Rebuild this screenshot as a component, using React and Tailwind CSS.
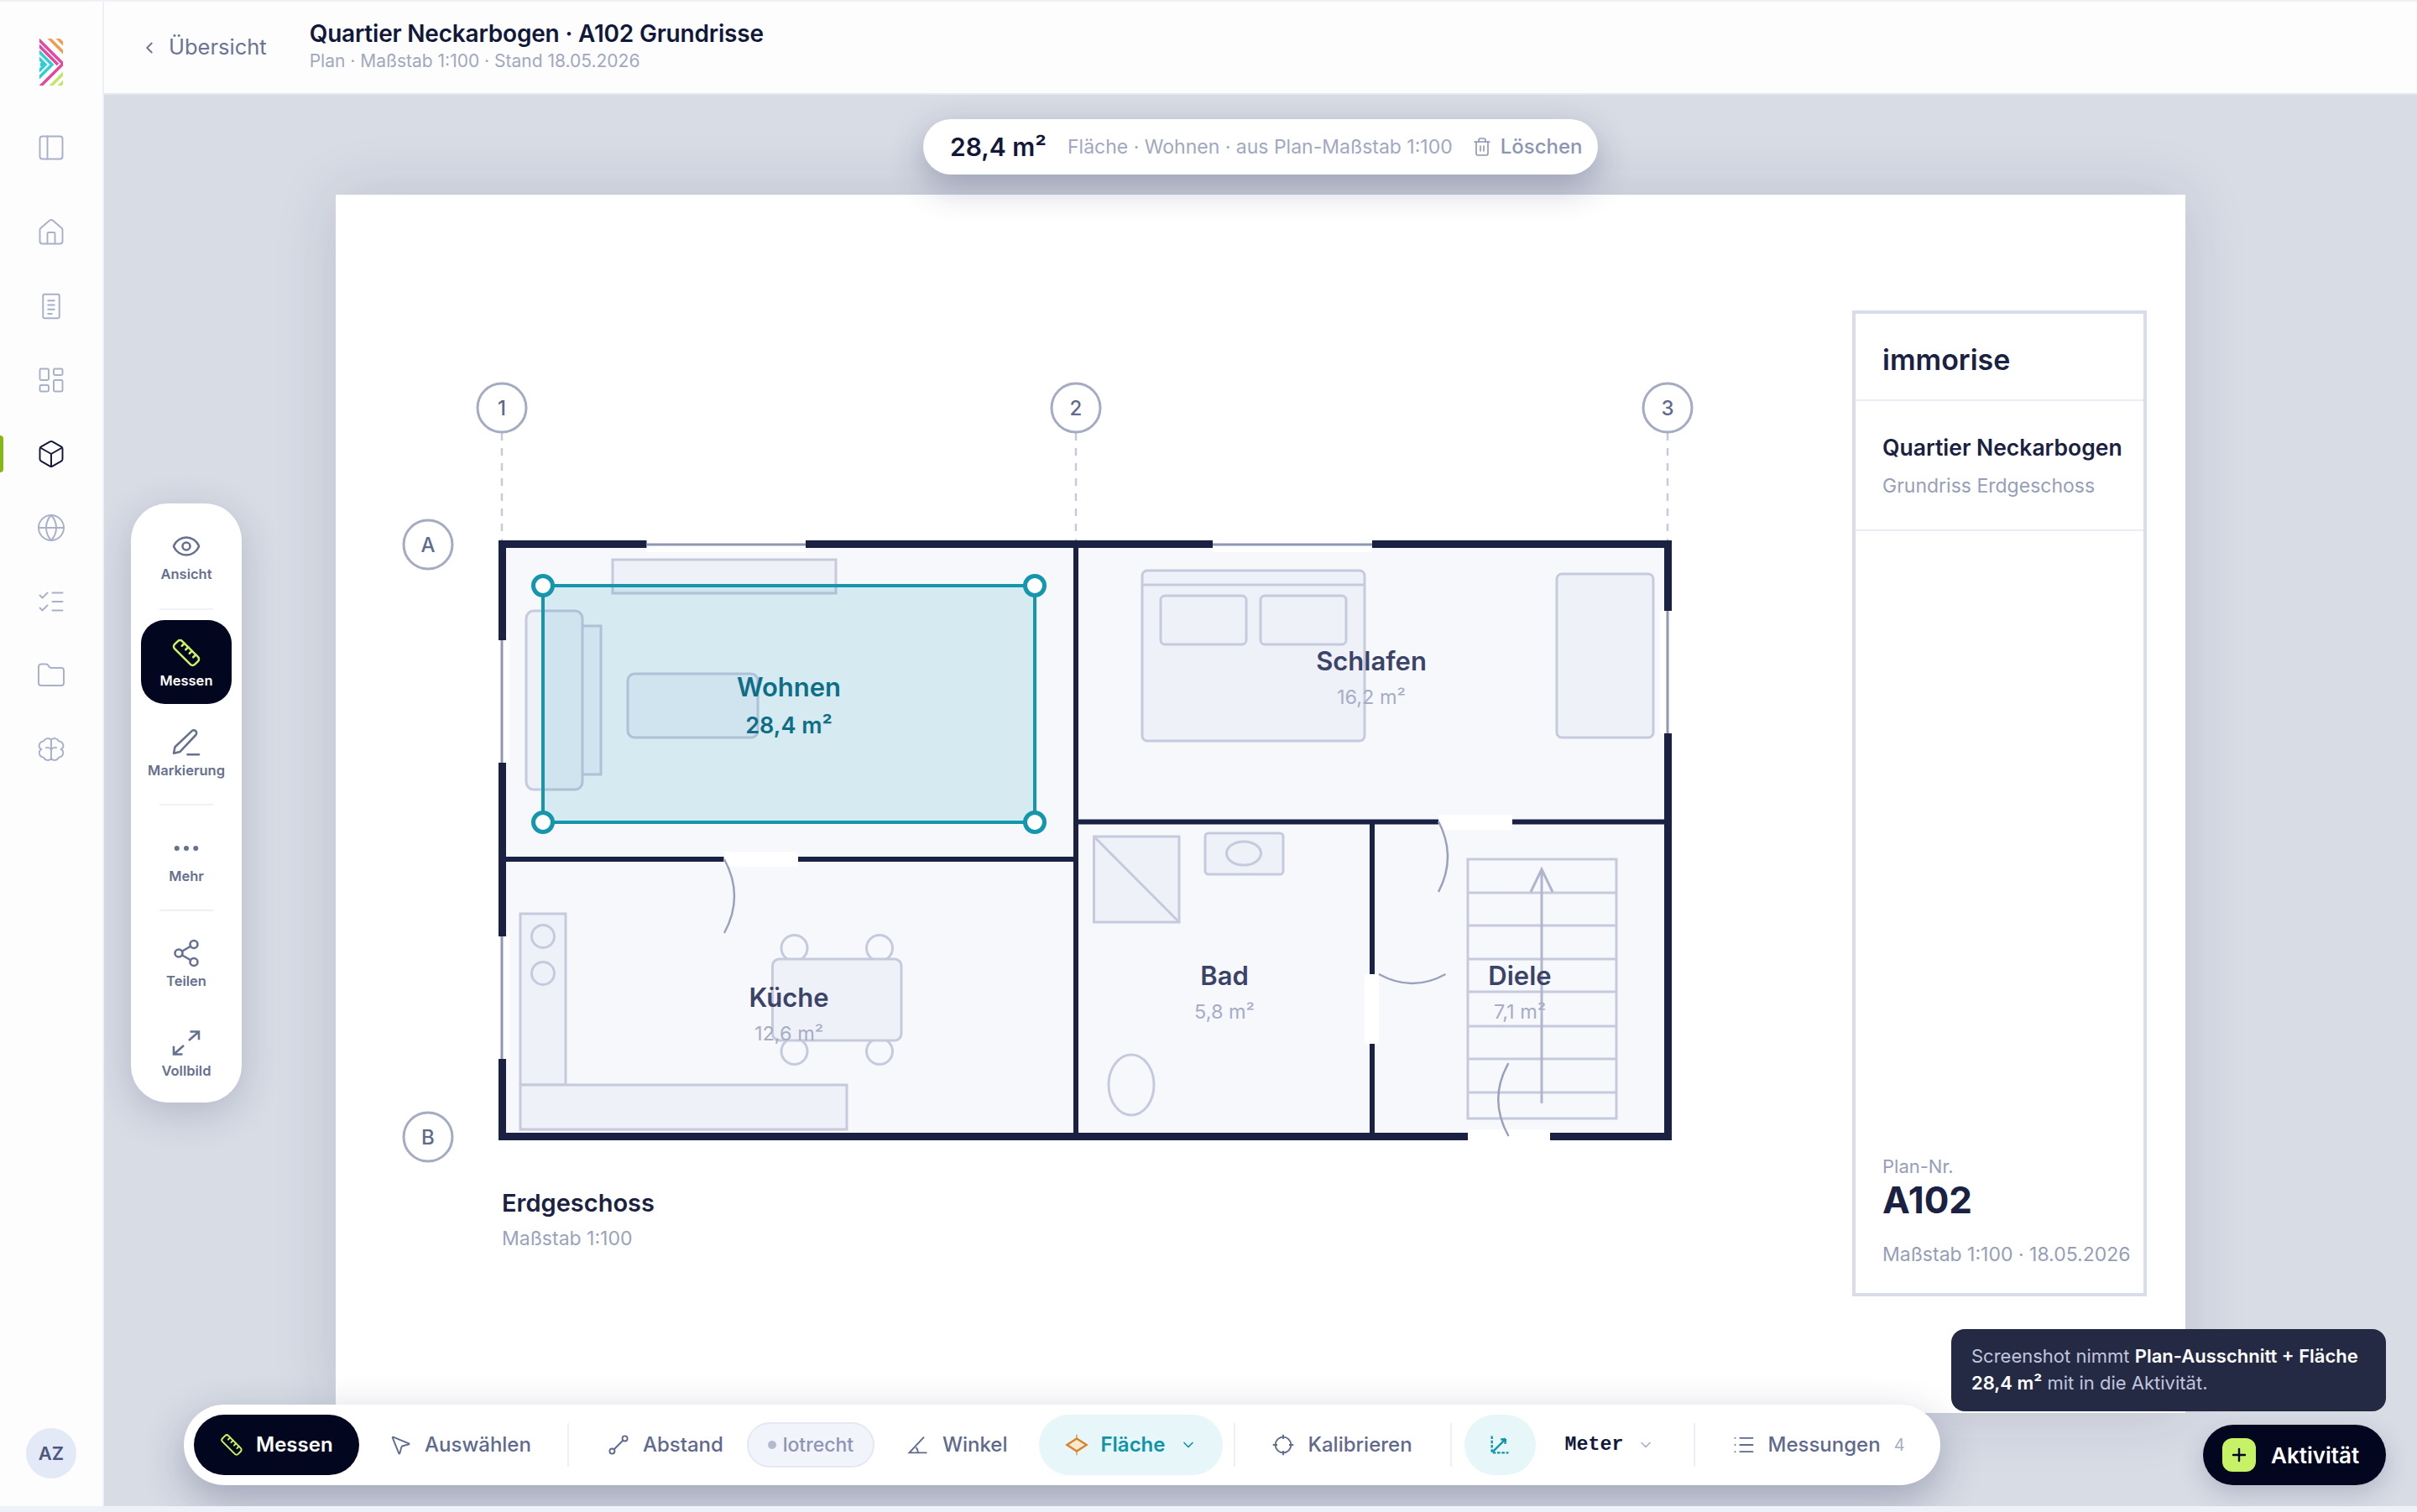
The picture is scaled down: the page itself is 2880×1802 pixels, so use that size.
import React from 'react';
import {
    Box, ChevronDown, ChevronLeft, Eye, Folder, Globe, House, LayoutDashboard,
    List, ListChecks, MousePointer2, PanelLeft, Plus, Ruler, Share2, Trash2,
} from 'lucide-react';

const Logo = () => (
    <svg width="28" height="56" viewBox="48 46 28 56" fill="none" strokeWidth="3.4">
        <path d="M58 44l20 20M68 44l10 10" stroke="#f39a4c" />
        <path d="M78 86L60 104M78 96l-8 8" stroke="#bfe765" />
        <path d="M46 46l30 30-30 30M46 53l24 24" stroke="#e6479b" />
        <path d="M46 60l17 17-17 17M46 68l9 9-9 9" stroke="#2ccfd8" />
        <circle cx="51" cy="77" r="2.4" fill="#2ccfd8" />
    </svg>
);

const DocIcon = (props) => (
    <svg viewBox="0 0 24 24" fill="none" stroke="currentColor" strokeWidth="1.3" {...props}>
        <rect x="5.500" y="2.500" width="13" height="19" rx="1" />
        <path d="M9 7.500h6M9 11h6M9 14.500h6M9 18h4" />
    </svg>
);

const BrainIcon = (props) => (
    <svg viewBox="0 0 24 24" fill="none" stroke="currentColor" strokeWidth="1.3" strokeLinejoin="round" {...props}>
        <path d="M12 4.500A3.600 3.600 0 0 0 6 5.600a3.600 3.600 0 0 0-3.200 5.200L4.200 12l-1.400 1.200A3.600 3.600 0 0 0 6 18.400a3.600 3.600 0 0 0 6 1.100 3.600 3.600 0 0 0 6-1.100 3.600 3.600 0 0 0 3.200-5.200L19.800 12l1.400-1.200A3.600 3.600 0 0 0 18 5.600a3.600 3.600 0 0 0-6-1.100Z" />
        <path d="M12 4.500v15M12 12.500c-1-2-3-2.200-4.500-1.500M12 12.500c1-2 3-2.200 4.500-1.500" />
    </svg>
);

const PenIcon = (props) => (
    <svg viewBox="0 0 24 24" fill="none" stroke="currentColor" strokeWidth="1.7" strokeLinecap="round" strokeLinejoin="round" {...props}>
        <path d="M2 20.500l1-5L16.300 2.900a2.200 2.200 0 0 1 3.200 3.100L7 19.300Z" />
        <path d="M13 21.500h9" />
    </svg>
);

const ExpandIcon = (props) => (
    <svg viewBox="0 0 24 24" fill="none" stroke="currentColor" strokeWidth="2" {...props}>
        <path d="M14 10l8-7M15 3h7v6.500M10 14l-8 7M9 21H2v-6.500" />
    </svg>
);

const DotsIcon = (props) => (
    <svg viewBox="0 0 24 24" fill="currentColor" {...props}>
        <circle cx="4.500" cy="12" r="2" />
        <circle cx="12" cy="12" r="2" />
        <circle cx="19.500" cy="12" r="2" />
    </svg>
);

const DistanceIcon = (props) => (
    <svg viewBox="0 0 24 24" fill="none" stroke="currentColor" strokeWidth="1.8" {...props}>
        <circle cx="5.500" cy="18.500" r="2.600" />
        <circle cx="18.500" cy="5.500" r="2.600" />
        <path d="M7.500 16.500l9-9" />
    </svg>
);

const AngleIcon = (props) => (
    <svg viewBox="0 0 24 24" fill="none" stroke="currentColor" strokeWidth="1.8" {...props}>
        <path d="M18 4L3 20h18M12 20c0-2.200-.8-4-2.200-5.400" />
    </svg>
);

const AreaIcon = (props) => (
    <svg viewBox="0 0 24 24" fill="none" {...props}>
        <path d="M12 1.500v4M12 18.500v4" stroke="#d9822b" strokeWidth="1" />
        <path d="M12 5.500L22 12l-10 6.500L2 12Z" fill="#fbe9cf" stroke="#d9822b" strokeWidth="2" />
    </svg>
);

const CalibrateIcon = (props) => (
    <svg viewBox="0 0 24 24" fill="none" stroke="currentColor" strokeWidth="1.8" {...props}>
        <circle cx="12" cy="12" r="8" />
        <path d="M12 1.500V6M12 18v4.500M1.500 12H6M18 12h4.500" />
    </svg>
);

const AxisIcon = (props) => (
    <svg viewBox="0 0 24 24" fill="none" stroke="currentColor" strokeWidth="2" {...props}>
        <path d="M4 3v17h17" strokeDasharray="3 1.500" />
        <path d="M5 19L18 6M18 6l-5 .5M18 6l-.5 5" />
    </svg>
);

const SIDE_ICONS = [
    { Icon: House },
    { Icon: DocIcon },
    { Icon: LayoutDashboard },
    { Icon: Box, active: true },
    { Icon: Globe },
    { Icon: ListChecks },
    { Icon: Folder },
    { Icon: BrainIcon },
];

const Sidebar = () => (
    <aside className="w-[124px] shrink-0 bg-[#fdfdfe] border-r-2 border-[#edf0f6] flex flex-col items-center relative">
        <div className="mt-[44px] h-[56px] flex"><Logo /></div>
        <PanelLeft className="mt-[56px] w-[36px] h-[36px] text-[#a9b1c9]" strokeWidth={1.3} />
        {SIDE_ICONS.map(({ Icon, active }, i) => (
            <div key={i} className={`h-[88px] w-full flex items-center justify-center relative ${i === 0 ? 'mt-[39px]' : ''}`}>
                {active && <span className="absolute left-0 top-[22px] w-[4px] h-[44px] rounded-r bg-[#84b817]" />}
                <Icon className={`w-[36px] h-[36px] ${active ? 'text-[#12183a]' : 'text-[#a9b1c9]'}`} strokeWidth={1.3} />
            </div>
        ))}
        <div className="mt-auto mb-[33px] w-[60px] h-[60px] rounded-full bg-[#e4e9f7] flex items-center justify-center text-[22px] font-semibold text-[#4d5880]">AZ</div>
    </aside>
);

const Header = () => (
    <header className="h-[111px] shrink-0 bg-[#fdfdfe] border-b-2 border-[#e6e9f0] flex items-center">
        <ChevronLeft className="ml-[43px] w-[22px] h-[22px] text-[#6b7494]" strokeWidth={2} />
        <span className="ml-[12px] text-[25.500px] text-[#6b7494]">Übersicht</span>
        <div className="ml-[51px] flex flex-col mb-[6px]">
            <h1 className="text-[28px] leading-[38px] font-semibold tracking-[-0.2px] text-[#12183a]">Quartier Neckarbogen · A102 Grundrisse</h1>
            <p className="text-[21px] leading-[28px] text-[#a1a8bf]">Plan · Maßstab 1:100 · Stand 18.05.2026</p>
        </div>
    </header>
);

const F = { fill: '#eef1f8', stroke: '#c5cadc', strokeWidth: 3 };
const Room = ({ x, y, name, area }) => (
    <g textAnchor="middle">
        <text x={x} y={y} fontSize="31" fontWeight="600" fill="#3b4468">{name}</text>
        <text x={x} y={y + 40} fontSize="23.500" fill="#a6adc4">{area}</text>
    </g>
);

const Bubble = ({ cx, cy, label }) => (
    <g>
        <circle cx={cx} cy={cy} r="29" fill="#fff" stroke="#a4abc2" strokeWidth="3" />
        <text x={cx} y={cy + 9} textAnchor="middle" fontSize="24" fontWeight="500" fill="#5f6a8d">{label}</text>
    </g>
);

const Plan = () => (
    <svg className="w-[1807px] h-[1452px] shrink-0" viewBox="400 232 1807 1452">
        {/* grid */}
        {[598, 1282, 1987].map((x) => (
            <path key={x} d={`M${x} 516V644`} stroke="#c5cadc" strokeWidth="2.500" strokeDasharray="9 9" />
        ))}
        <Bubble cx={598} cy={486} label="1" />
        <Bubble cx={1282} cy={486} label="2" />
        <Bubble cx={1987} cy={486} label="3" />
        <Bubble cx={510} cy={649} label="A" />
        <Bubble cx={510} cy={1355} label="B" />

        {/* floor */}
        <rect x="598" y="648" width="1390" height="707" fill="#f6f8fc" />

        {/* furniture wohnen */}
        <rect x="730" y="667" width="266" height="40" {...F} />
        <rect x="693" y="746" width="23" height="177" {...F} />
        <rect x="627" y="728" width="67" height="213" rx="9" {...F} />
        <rect x="748" y="803" width="155" height="76" rx="8" {...F} />

        {/* furniture schlafen */}
        <rect x="1361" y="680" width="265" height="203" rx="6" {...F} />
        <path d="M1361 697H1626" stroke="#c5cadc" strokeWidth="3" />
        <rect x="1383" y="710" width="102" height="58" rx="5" {...F} />
        <rect x="1502" y="710" width="102" height="58" rx="5" {...F} />
        <rect x="1855" y="684" width="115" height="195" rx="6" {...F} />

        {/* furniture kueche */}
        <rect x="620" y="1089" width="54" height="204" {...F} />
        <rect x="620" y="1293" width="389" height="53" {...F} />
        <circle cx="647" cy="1116" r="13.500" fill="none" stroke="#c5cadc" strokeWidth="3" />
        <circle cx="647" cy="1160" r="13.500" fill="none" stroke="#c5cadc" strokeWidth="3" />
        {[[946.5, 1130], [1048, 1130], [946.5, 1253], [1048, 1253]].map(([cx, cy]) => (
            <circle key={`${cx}-${cy}`} cx={cx} cy={cy} r="15.500" fill="none" stroke="#c5cadc" strokeWidth="3" />
        ))}
        <rect x="920.500" y="1143" width="153.500" height="97" rx="8" {...F} />

        {/* furniture bad */}
        <rect x="1303.500" y="997" width="101.500" height="102" {...F} />
        <path d="M1303.500 997L1405 1099" stroke="#c5cadc" strokeWidth="3" />
        <rect x="1436" y="993" width="93" height="49" rx="4" {...F} />
        <ellipse cx="1482" cy="1017" rx="20.500" ry="14" fill="none" stroke="#c5cadc" strokeWidth="3" />
        <ellipse cx="1348" cy="1293" rx="27" ry="36" fill="none" stroke="#c5cadc" strokeWidth="3" />

        {/* treppe */}
        <rect x="1749" y="1024" width="177" height="309" fill="none" stroke="#c5cadc" strokeWidth="3" />
        <path d="M1749 1064H1926M1749 1103H1926M1749 1143H1926M1749 1182H1926M1749 1223H1926M1749 1262H1926M1749 1302H1926" stroke="#c5cadc" strokeWidth="3" />
        <path d="M1837 1315V1038M1824 1063L1837 1036L1850 1063" fill="none" stroke="#b0b7cc" strokeWidth="3" />

        {/* walls */}
        <path d="M1282 648V1355M1282 979.500H1988M1635 979.500V1355M598 1024H1282" fill="none" stroke="#1a2142" strokeWidth="6" />
        <rect x="598.500" y="648.500" width="1389" height="706" fill="none" stroke="#1a2142" strokeWidth="9" />

        {/* windows */}
        <rect x="770.500" y="643" width="189.500" height="15" fill="#fff" />
        <rect x="1445" y="643" width="190" height="15" fill="#fff" />
        <path d="M770.500 649H960M1445 649H1635" stroke="#8f97b3" strokeWidth="3" />
        <rect x="593" y="763" width="14" height="146" fill="#fff" />
        <rect x="593" y="1116" width="14" height="146" fill="#fff" />
        <rect x="1978" y="728" width="15" height="146" fill="#fff" />
        <path d="M598 763V909M598 1116V1262M1987 728V874" stroke="#8f97b3" strokeWidth="3" />

        {/* doors */}
        <rect x="862.500" y="1015" width="88.500" height="18" fill="#fff" />
        <rect x="1714" y="971" width="88" height="18" fill="#fff" />
        <rect x="1626" y="1161" width="17" height="83" fill="#fff" />
        <rect x="1749" y="1346" width="98" height="14" fill="#fff" />
        <path d="M863 1024Q887 1068 863 1112M1714 979Q1736 1021 1714 1063M1643 1161Q1683 1183 1722.500 1161M1797.500 1354Q1773 1310 1797.500 1267" fill="none" stroke="#9aa1bb" strokeWidth="2.500" />

        {/* labels */}
        <Room x={1634} y={799} name="Schlafen" area="16,2 m²" />
        <Room x={940} y={1200} name="Küche" area="12,6 m²" />
        <Room x={1459} y={1174} name="Bad" area="5,8 m²" />
        <Room x={1811} y={1174} name="Diele" area="7,1 m²" />

        {/* messflaeche */}
        <rect x="647" y="698" width="586" height="282" fill="#1296af" fillOpacity="0.14" stroke="#1496ad" strokeWidth="4" />
        {[[647, 698], [1233, 698], [647, 980], [1233, 980]].map(([cx, cy]) => (
            <circle key={`${cx}-${cy}`} cx={cx} cy={cy} r="11.500" fill="#fff" stroke="#1496ad" strokeWidth="5" />
        ))}
        <g textAnchor="middle" fontWeight="600" fill="#0e6e87">
            <text x="940" y="830" fontSize="31">Wohnen</text>
            <text x="940" y="874" fontSize="27">28,4 m²</text>
        </g>

        <text x="598" y="1444" fontSize="29" fontWeight="600" fill="#1a2142">Erdgeschoss</text>
        <text x="598" y="1484" fontSize="23" fill="#9ba3bb">Maßstab 1:100</text>
    </svg>
);

const TitleBlock = () => (
    <div className="w-[351px] h-[1175px] mt-[138px] border-[4px] border-[#d8dde9] flex flex-col">
        <div className="h-[104px] shrink-0 border-b-[2px] border-[#e9ecf4] pl-[32px] pt-[7px] flex items-center">
            <span className="text-[34px] font-semibold text-[#1a2142]">immorise</span>
        </div>
        <div className="h-[155px] shrink-0 border-b-[2px] border-[#e9ecf4] pl-[32px] pt-[35px]">
            <div className="text-[26.500px] leading-[40px] font-semibold text-[#1a2142] whitespace-nowrap">Quartier Neckarbogen</div>
            <div className="mt-[8px] text-[23px] leading-[36px] text-[#969eb8] whitespace-nowrap">Grundriss Erdgeschoss</div>
        </div>
        <div className="mt-auto pl-[32px] pb-[30px]">
            <div className="text-[22px] leading-[28px] text-[#969eb8] translate-y-[2px]">Plan-Nr.</div>
            <div className="text-[44px] leading-[56px] font-bold text-[#1a2142]">A102</div>
            <div className="mt-[21px] text-[23px] leading-[32px] text-[#969eb8] whitespace-nowrap">Maßstab 1:100 · 18.05.2026</div>
        </div>
    </div>
);

const TOOLS = [
    { Icon: Eye, label: 'Ansicht', divider: 'mt-[9px] mb-[12px]' },
    { Icon: Ruler, label: 'Messen', active: true },
    { Icon: PenIcon, label: 'Markierung', cls: 'mt-[11px]', divider: 'mt-[8px] mb-[16px]' },
    { Icon: DotsIcon, label: 'Mehr', divider: 'mt-[8px] mb-[15px]' },
    { Icon: Share2, label: 'Teilen' },
    { Icon: ExpandIcon, label: 'Vollbild', cls: 'mt-[7px]' },
];

const ToolPanel = () => (
    <div className="absolute left-[32px] top-[487px] w-[132px] h-[714px] bg-white rounded-[44px] shadow-[0_12px_48px_rgba(30,38,80,0.2)] flex flex-col items-center pt-[16px]">
        {TOOLS.map(({ Icon, label, divider, active, cls }) => (
            <React.Fragment key={label}>
                <div className={`w-[108px] h-[100px] shrink-0 flex flex-col items-center justify-center gap-[4px] rounded-[28px] ${active ? 'bg-[#02071f] text-white pt-[4px]' : 'text-[#66708f] pb-[4px]'} ${cls || ''}`}>
                    <Icon className={`w-[36px] h-[36px] ${active ? 'text-[#c8f266]' : ''}`} strokeWidth={1.7} />
                    <span className="text-[16.500px] leading-[22px] font-semibold whitespace-nowrap">{label}</span>
                </div>
                {divider && <div className={`w-[64px] h-[2px] shrink-0 bg-[#eff1f6] ${divider}`} />}
            </React.Fragment>
        ))}
    </div>
);

const Divider = ({ className }) => <div className={`w-[2px] h-[52px] shrink-0 bg-[#eceff5] ${className}`} />;

const Tool = ({ Icon, label, className }) => (
    <div className={`flex items-center gap-[15px] text-[24px] font-medium text-[#5f6a8d] whitespace-nowrap shrink-0 ${className}`}>
        <Icon className="w-[28px] h-[28px] shrink-0" strokeWidth={1.6} />
        <span>{label}</span>
    </div>
);

const Toolbar = () => (
    <div className="absolute left-[95px] top-[1561px] w-[2093px] h-[96px] bg-white rounded-full shadow-[0_18px_50px_rgba(30,38,80,0.3)] flex items-center pl-[12px]">
        <div className="w-[197px] h-[72px] shrink-0 rounded-full bg-[#02071f] flex items-center gap-[15px] pl-[31px] text-[24px] font-semibold text-white">
            <Ruler className="w-[28px] h-[28px] text-[#c8f266]" strokeWidth={1.7} />
            Messen
        </div>
        <Tool Icon={MousePointer2} label="Auswählen" className="ml-[35px]" />
        <Divider className="ml-[43px]" />
        <Tool Icon={DistanceIcon} label="Abstand" className="ml-[45px]" />
        <div className="ml-[28px] w-[152px] h-[54px] shrink-0 rounded-full bg-[#f1f4fa] border-2 border-[#e4e8f2] flex items-center justify-center gap-[8px] text-[23px] font-medium text-[#8d95b3]">
            <span className="w-[10px] h-[10px] rounded-full bg-[#b3bad0]" />
            lotrecht
        </div>
        <Tool Icon={AngleIcon} label="Winkel" className="ml-[38px]" />
        <div className="ml-[38px] w-[219px] h-[72px] shrink-0 rounded-full bg-[#e6f6f9] flex items-center pl-[31px] text-[24px] font-semibold text-[#0e93a8]">
            <AreaIcon className="w-[28px] h-[28px]" />
            <span className="ml-[14px]">Fläche</span>
            <ChevronDown className="ml-[17px] w-[20px] h-[20px]" strokeWidth={2} />
        </div>
        <Divider className="ml-[13px]" />
        <Tool Icon={CalibrateIcon} label="Kalibrieren" className="ml-[43px]" />
        <Divider className="ml-[45px]" />
        <div className="ml-[15px] w-[85px] h-[72px] shrink-0 rounded-full bg-[#e6f6f9] flex items-center justify-center text-[#0e93a8]">
            <AxisIcon className="w-[28px] h-[28px]" />
        </div>
        <span className="ml-[35px] font-['Liberation_Mono',monospace] text-[23.300px] font-bold text-[#12183a]">Meter</span>
        <ChevronDown className="ml-[16px] w-[20px] h-[20px] text-[#a6adc4]" strokeWidth={2} />
        <Divider className="ml-[47px]" />
        <Tool Icon={List} label="Messungen" className="ml-[44px]" />
        <span className="ml-[16px] text-[20px] text-[#a6adc4]">4</span>
    </div>
);

const AreaPill = () => (
    <div className="absolute left-[976px] top-[29px] w-[804px] h-[66px] rounded-full bg-white shadow-[0_14px_40px_rgba(30,38,80,0.3)] flex items-center pl-[32px] whitespace-nowrap">
        <span className="text-[30px] font-semibold text-[#12183a]">28,4 m²</span>
        <span className="ml-[25px] text-[23px] text-[#a1a8bf]">Fläche · Wohnen · aus Plan-Maßstab 1:100</span>
        <Trash2 className="ml-[23px] w-[24px] h-[24px] shrink-0 text-[#8d95b3]" strokeWidth={1.6} />
        <span className="ml-[10px] text-[24px] font-medium text-[#8d95b3]">Löschen</span>
    </div>
);

const App = () => (
    <div className="w-screen h-screen overflow-hidden bg-[#eef2f8] pt-[2px] pb-[7px] flex font-[Inter,sans-serif]">
        <Sidebar />
        <div className="flex-1 min-w-0 flex flex-col">
            <Header />
            <main className="flex-1 relative overflow-hidden bg-[#d8dce5]">
                <div className="ml-[276px] mt-[119px] w-[2204px] h-[1452px] bg-white shadow-[0_0_70px_rgba(30,38,80,0.14)] flex">
                    <Plan />
                    <TitleBlock />
                </div>
                <AreaPill />
                <ToolPanel />
                <Toolbar />
                <div className="absolute left-[2201px] top-[1471px] w-[518px] h-[98px] rounded-[16px] bg-[#252a44] pl-[24px] pt-[16px] text-[22px] leading-[32px] text-[#c0c5dc] whitespace-nowrap">
                    Screenshot nimmt <b className="font-semibold text-white">Plan-Ausschnitt + Fläche</b>
                    <br />
                    <b className="font-semibold text-white">28,4 m²</b> mit in die Aktivität.
                </div>
                <div className="absolute left-[2501px] top-[1585px] w-[218px] h-[72px] rounded-full bg-[#02071f] flex items-center pl-[23px] gap-[18px] text-[26px] font-semibold text-white shadow-[0_10px_30px_rgba(30,38,80,0.2)]">
                    <span className="w-[40px] h-[40px] rounded-[12px] bg-[#c8f266] flex items-center justify-center">
                        <Plus className="w-[24px] h-[24px] text-[#02071f]" strokeWidth={2.4} />
                    </span>
                    Aktivität
                </div>
            </main>
        </div>
    </div>
);

export default App;
